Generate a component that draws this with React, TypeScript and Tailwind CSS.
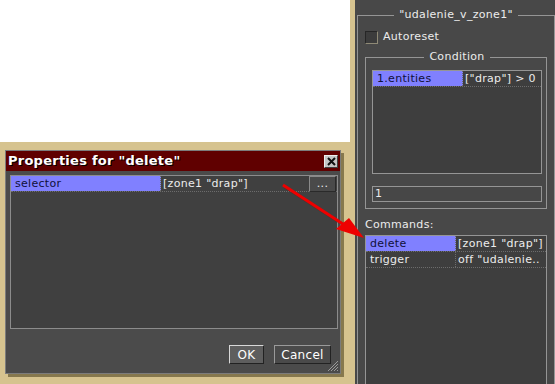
import React from "react";

const font = { fontFamily: '"DejaVu Sans", Verdana, sans-serif' };

function PropRow({
  name,
  value,
  keyWidth,
  selected,
  children,
}: {
  name: string;
  value: string;
  keyWidth: string;
  selected?: boolean;
  children?: React.ReactNode;
}) {
  return (
    <div className="flex h-[16px] border-b border-dotted border-[#6c6c6c] text-[11px] leading-[15px] tracking-[0.3px]">
      <div
        className={`${keyWidth} shrink-0 border-r border-dotted border-[#6c6c6c] pl-[4px] ${
          selected ? "bg-[#8080ff] text-[#10103a]" : "text-[#ececec]"
        }`}
      >
        {name}
      </div>
      <div className="flex-1 truncate whitespace-nowrap pl-[2px] text-[#ececec]">{value}</div>
      {children}
    </div>
  );
}

function Dialog() {
  return (
    <div className="relative ml-[5px] mt-[8px] flex h-[224px] w-[336px] flex-col border border-[#7c7c7c] shadow-[3px_3px_0_rgba(70,58,25,0.55)]">
      {/* ---- Title bar ---- */}
      <div className="flex h-[20px] items-center justify-between bg-[#600000] pl-[2px] pr-[2px]">
        <span className="text-[13px] font-bold leading-[18px] tracking-[0.25px] text-white [text-shadow:1px_1px_0_#000]">
          Properties for "delete"
        </span>
        <button
          type="button"
          className="flex h-[13px] w-[14px] items-center justify-center border border-t-[#eeeeee] border-l-[#eeeeee] border-b-[#404040] border-r-[#404040] bg-[#c6c6c6]"
        >
          <svg width="9" height="9" viewBox="0 0 9 9">
            <path d="M1 1 L8 8 M8 1 L1 8" stroke="#111" strokeWidth="2" />
          </svg>
        </button>
      </div>

      {/* ---- Body ---- */}
      <div className="flex flex-1 flex-col bg-[#4b4b4b] pl-[4px] pr-[2px] pt-[4px]">
        <div className="h-[154px] border border-[#8c8c8c] bg-[#404040]">
          <PropRow name="selector" value={'[zone1 "drap"]'} keyWidth="w-[150px]" selected>
            <button
              type="button"
              className="mr-[1px] h-[16px] w-[27px] shrink-0 border border-t-[#8a8a8a] border-l-[#8a8a8a] border-b-[#2a2a2a] border-r-[#2a2a2a] bg-[#4a4a4a] text-[11px] leading-[12px] text-[#ececec]"
            >
              ...
            </button>
          </PropRow>
        </div>

        <div className="mt-[16px] flex justify-end gap-[10px] pr-[7px]">
          <button
            type="button"
            className="h-[19px] w-[35px] border border-t-[#d8d8d8] border-l-[#d8d8d8] border-b-[#222] border-r-[#222] bg-[#5e5e5e] text-[12px] leading-[16px] tracking-[0.3px] text-white"
          >
            OK
          </button>
          <button
            type="button"
            className="h-[19px] w-[57px] border border-t-[#9a9a9a] border-l-[#9a9a9a] border-b-[#222] border-r-[#222] bg-[#4a4a4a] text-[12px] leading-[16px] tracking-[0.3px] text-white"
          >
            Cancel
          </button>
        </div>
      </div>

      {/* resize grip */}
      <svg className="absolute bottom-[1px] right-[1px]" width="13" height="13" viewBox="0 0 13 13">
        <path d="M12 2 L2 12 M12 5 L5 12 M12 8 L8 12 M12 11 L11 12" stroke="#9a9a9a" strokeWidth="1" />
      </svg>
    </div>
  );
}

function TriggerPanel() {
  return (
    <div className="flex h-full w-[200px] shrink-0 flex-col bg-[#484848] pl-[2px] pr-[2px] pt-[8px] text-[#ececec] tracking-[0.3px]">
      <fieldset className="flex-1 border border-b-0 border-[#959595] px-[7px]">
        <legend className="mx-auto px-[5px] text-[11px] leading-[14px]">"udalenie_v_zone1"</legend>

        <label className="mt-[8px] flex items-center gap-[5px] text-[11px] leading-[14px]">
          <span className="h-[13px] w-[13px] border border-t-[#262626] border-l-[#262626] border-b-[#8f8a76] border-r-[#8f8a76] bg-[#3c3c3c]" />
          Autoreset
        </label>

        {/* ---- Condition ---- */}
        <fieldset className="mt-[6px] border border-[#959595] pb-[6px] pl-[6px] pr-[4px]">
          <legend className="mx-auto px-[5px] text-[11px] leading-[14px]">Condition</legend>
          <div className="mt-[6px] h-[104px] border border-[#959595] bg-[#3e3e3e]">
            <PropRow name="1.entities" value={'["drap"] > 0'} keyWidth="w-[90px]" selected />
          </div>
          <div className="mt-[12px] h-[16px] border border-[#959595] bg-[#474747] pl-[2px] text-[11px] leading-[14px]">
            1
          </div>
        </fieldset>

        {/* ---- Commands ---- */}
        <div className="mt-[9px] text-[11px] leading-[14px]">Commands:</div>
        <div className="mt-[3px] h-[160px] w-[182px] border border-b-0 border-[#959595] bg-[#3e3e3e]">
          <PropRow name="delete" value={'[zone1 "drap"]'} keyWidth="w-[90px]" selected />
          <PropRow name="trigger" value={'off "udalenie..'} keyWidth="w-[90px]" />
        </div>
      </fieldset>
    </div>
  );
}

export default function App() {
  return (
    <div className="relative flex h-[384px] w-[555px] overflow-hidden bg-[#d6c38f]" style={font}>
      <div className="flex w-[355px] shrink-0 flex-col">
        <div className="h-[142px] w-[350px] bg-white" />
        <Dialog />
      </div>
      <TriggerPanel />

      {/* red pointer arrow */}
      <svg className="pointer-events-none absolute left-0 top-0" width="555" height="384" viewBox="0 0 555 384">
        <line x1="284" y1="186" x2="346" y2="226" stroke="#6a1a10" strokeWidth="3" opacity="0.35" transform="translate(1 1)" />
        <line x1="283" y1="185" x2="346" y2="226" stroke="#ee0000" strokeWidth="3" />
        <polygon points="364,238 336,229 349,218" fill="#ee0000" />
      </svg>
    </div>
  );
}
